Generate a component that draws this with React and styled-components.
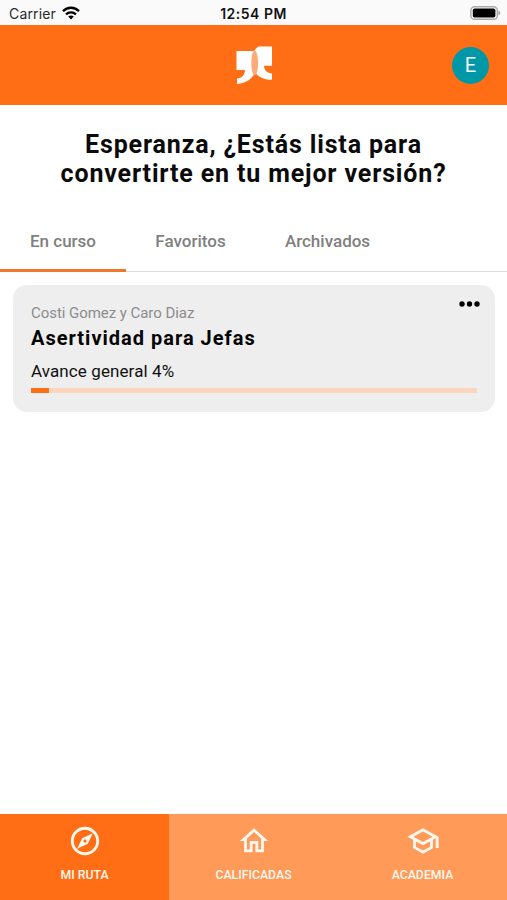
import React from "react";
import styled, { createGlobalStyle } from "styled-components";
import {
  MdOutlineExplore,
  MdOutlineHome,
  MdOutlineSchool,
} from "react-icons/md";

const GlobalStyle = createGlobalStyle`
  * {
    box-sizing: border-box;
  }
  body {
    margin: 0;
    background: #fff;
    font-family: Roboto, "Liberation Sans", sans-serif;
  }
`;

const Screen = styled.div`
  display: flex;
  flex-direction: column;
  height: 100vh;
  overflow: hidden;
`;

const StatusBar = styled.div`
  display: grid;
  grid-template-columns: 1fr auto 1fr;
  align-items: center;
  height: 25px;
  flex-shrink: 0;
  padding: 2px 6px 0 9px;
  background: #fafafa;
  color: #111;
  font-family: Inter, sans-serif;
  font-size: 14px;
`;

const Carrier = styled.div`
  display: flex;
  align-items: center;
  gap: 6px;
  color: #2a2a2a;
  letter-spacing: 0.15px;
  svg {
    margin-top: -2px;
  }
`;

const Clock = styled.div`
  margin-right: 3px;
  font-weight: 600;
  letter-spacing: 0.5px;
`;

const Battery = styled.div`
  display: flex;
  justify-content: flex-end;
  svg {
    margin-top: -2px;
  }
`;

const Header = styled.header`
  display: grid;
  grid-template-columns: 1fr auto 1fr;
  align-items: center;
  height: 80px;
  flex-shrink: 0;
  padding: 0 18px;
  background: #ff6e14;
`;

const Logo = styled.svg`
  grid-column: 2;
  display: block;
`;

const Avatar = styled.div`
  display: flex;
  align-items: center;
  justify-content: center;
  justify-self: end;
  width: 37px;
  height: 37px;
  border-radius: 50%;
  background: #0097a7;
  color: #fff;
  font-size: 20px;
`;

const Greeting = styled.h1`
  margin: 25px 0 0;
  text-align: center;
  font-size: 25px;
  line-height: 29px;
  font-weight: 700;
  letter-spacing: 0.85px;
  color: #0b0b0b;
`;

const Tabs = styled.nav`
  display: flex;
  height: 60px;
  flex-shrink: 0;
  margin-top: 24px;
  border-bottom: 1px solid #dedede;
`;

const Tab = styled.div`
  display: flex;
  align-items: center;
  justify-content: center;
  width: ${(props) => props.$width}px;
  height: 60px;
  padding-top: 1px;
  border-bottom: 3px solid
    ${(props) => (props.$active ? "#f0762b" : "transparent")};
  color: #808080;
  font-size: 17px;
  font-weight: 500;
`;

const Card = styled.section`
  height: 127px;
  flex-shrink: 0;
  margin: 12.5px 12px 0 13px;
  padding: 19px 18px 0;
  border-radius: 14px;
  background: #eee;
`;

const CardTop = styled.div`
  display: flex;
  justify-content: space-between;
`;

const Author = styled.div`
  font-size: 15px;
  line-height: 18px;
  letter-spacing: -0.05px;
  color: #8c8c8c;
`;

const Dots = styled.svg`
  margin: -3px -3px 0 0;
`;

const CourseTitle = styled.h2`
  margin: 4px 0 0;
  font-size: 20px;
  line-height: 24px;
  font-weight: 700;
  letter-spacing: 1px;
  color: #050505;
`;

const Advance = styled.div`
  margin-top: 11.5px;
  font-size: 17px;
  line-height: 20px;
  letter-spacing: 0.1px;
  color: #111;
`;

const Track = styled.div`
  height: 5px;
  margin-top: 7px;
  background: #fbd6bc;
`;

const Fill = styled.div`
  height: 5px;
  background: #ff6e14;
`;

const BottomNav = styled.nav`
  display: flex;
  height: 86px;
  margin-top: auto;
  flex-shrink: 0;
`;

const NavItem = styled.div`
  display: flex;
  flex: 1;
  flex-direction: column;
  align-items: center;
  gap: 9px;
  padding-top: 10px;
  background: ${(props) => (props.$active ? "#ff6e14" : "#ff9a58")};
  color: #fff8f0;
  font-size: 12.3px;
  line-height: 17px;
  font-weight: 500;
`;

const tabs = [
  { label: "En curso", width: 126 },
  { label: "Favoritos", width: 129 },
  { label: "Archivados", width: 145 },
];

const navItems = [
  { label: "MI RUTA", icon: MdOutlineExplore },
  { label: "CALIFICADAS", icon: MdOutlineHome },
  { label: "ACADEMIA", icon: MdOutlineSchool },
];

const WifiIcon = () => (
  <svg width="18" height="14" viewBox="0 0 18 14" fill="none">
    <path d="M1 5.2C5.4.6 12.6.6 17 5.2" stroke="#000" strokeWidth="2.4" />
    <path d="M4 8.3c2.8-2.7 7.2-2.7 10 0" stroke="#000" strokeWidth="2.3" />
    <path d="M6.2 10.6c1.6-1.5 4-1.5 5.6 0L9 13.5z" fill="#000" />
  </svg>
);

const BatteryIcon = () => (
  <svg width="31" height="14" viewBox="0 0 31 14">
    <rect x=".9" y=".7" width="26.4" height="12.6" rx="3.6" fill="#fafafa" stroke="#aaa" strokeWidth="1.4" />
    <rect x="2.8" y="2.5" width="22.6" height="9" rx="1.8" fill="#000" />
    <path d="M28.4 4.6q2 1 2 2.4t-2 2.4z" fill="#aaa" />
  </svg>
);

const App = () => {
  const progress = 4;
  return (
    <Screen>
      <GlobalStyle />
      <StatusBar>
        <Carrier>
          Carrier
          <WifiIcon />
        </Carrier>
        <Clock>12:54 PM</Clock>
        <Battery>
          <BatteryIcon />
        </Battery>
      </StatusBar>
      <Header>
        <Logo width="36" height="38" viewBox="0 0 36 38">
          <path
            d="M.5 5H19c3 5 3.500 12 1.500 18-2.500 8.500-9.500 14.500-19.500 15v-5.500c5-.5 7.800-3.500 8-8.500H.5z"
            fill="#fff"
          />
          <path
            d="M36 .5H22.500C18 3 15.500 9 15.500 16c0 10.500 8 17.500 20.500 17.800v-6.300c-4.800-.3-7.700-3-8-7.700h8z"
            fill="#fff"
          />
          <ellipse cx="18.700" cy="17" rx="3.400" ry="12.200" fill="#ffab78" />
        </Logo>
        <Avatar>E</Avatar>
      </Header>
      <Greeting>
        Esperanza, ¿Estás lista para
        <br />
        convertirte en tu mejor versión?
      </Greeting>
      <Tabs>
        {tabs.map((tab, i) => (
          <Tab key={tab.label} $width={tab.width} $active={i === 0}>
            {tab.label}
          </Tab>
        ))}
      </Tabs>
      <Card>
        <CardTop>
          <Author>Costi Gomez y Caro Diaz</Author>
          <Dots width="21" height="6" viewBox="0 0 21 6">
            <circle cx="3" cy="3" r="2.700" />
            <circle cx="10.500" cy="3" r="2.700" />
            <circle cx="18" cy="3" r="2.700" />
          </Dots>
        </CardTop>
        <CourseTitle>Asertividad para Jefas</CourseTitle>
        <Advance>Avance general {progress}%</Advance>
        <Track>
          <Fill style={{ width: `${progress}%` }} />
        </Track>
      </Card>
      <BottomNav>
        {navItems.map(({ label, icon: Icon }, i) => (
          <NavItem key={label} $active={i === 0}>
            <Icon size={34} />
            {label}
          </NavItem>
        ))}
      </BottomNav>
    </Screen>
  );
};

export default App;
